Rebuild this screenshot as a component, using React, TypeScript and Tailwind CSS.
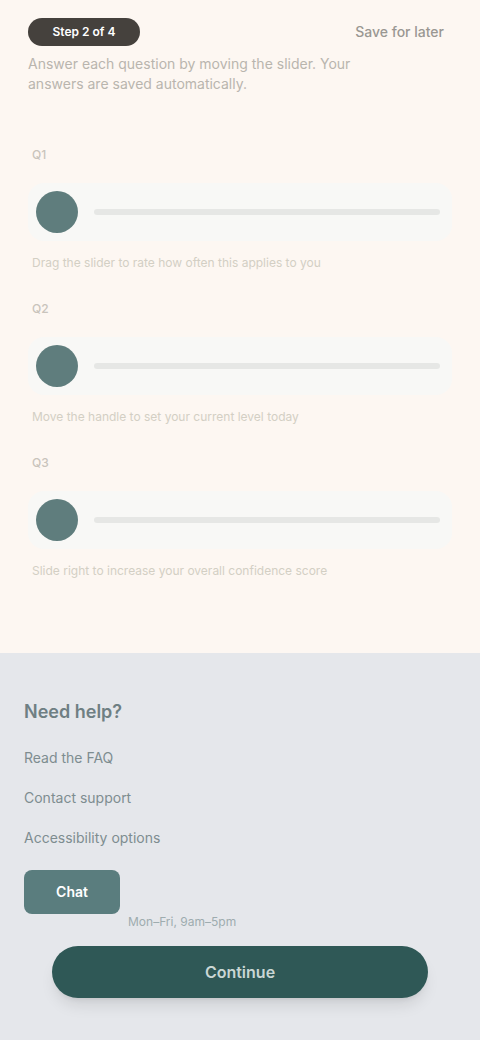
import React from "react";

const questions = [
  { label: "Q1", hint: "Drag the slider to rate how often this applies to you" },
  { label: "Q2", hint: "Move the handle to set your current level today" },
  { label: "Q3", hint: "Slide right to increase your overall confidence score" },
];

function SliderRow() {
  return (
    <div className="flex items-center gap-4 rounded-2xl bg-[#f8f8f6] py-2 pl-2 pr-3">
      <div className="h-[42px] w-[42px] shrink-0 rounded-full bg-[#5f7d7d]" />
      <div className="h-1.5 flex-1 rounded-full bg-[#e6e7e5]" />
    </div>
  );
}

export default function App() {
  return (
    <div
      className="relative min-h-[1040px] w-full bg-[#fdf7f2]"
      style={{ fontFamily: "Inter, 'Noto Sans', sans-serif" }}
    >
      <div className="px-7 pt-[18px]">
        <div className="flex items-center justify-between">
          <div className="flex h-7 w-[112px] items-center justify-center rounded-full bg-[#45413d] text-xs font-semibold text-white">
            Step 2 of 4
          </div>
          <span className="pr-2 text-sm font-medium text-[#9a9792]">Save for later</span>
        </div>
        <p className="mt-2 w-[350px] text-sm leading-5 text-[#b9b5ae]">
          Answer each question by moving the slider. Your answers are saved automatically.
        </p>
      </div>

      <div className="mt-[53px] flex flex-col gap-[30px] px-7">
        {questions.map((q) => (
          <div key={q.label} className="flex flex-col">
            <span className="pl-1 text-xs font-medium text-[#c9c4bc]">{q.label}</span>
            <div className="mt-[20px]">
              <SliderRow />
            </div>
            <p className="mt-[14px] pl-1 text-xs text-[#d3cfc4]">{q.hint}</p>
          </div>
        ))}
      </div>

      <footer className="absolute bottom-0 left-0 right-0 h-[387px] bg-[#e5e7eb] px-6 pt-[45px]">
        <h3 className="text-lg font-semibold text-[#6f7f83]">Need help?</h3>
        <ul className="mt-[22px] flex flex-col gap-[20px] text-sm text-[#7e8d90]">
          <li>Read the FAQ</li>
          <li>Contact support</li>
          <li>Accessibility options</li>
        </ul>
        <div className="mt-[22px] flex items-center gap-3">
          <div className="flex h-11 w-[96px] items-center justify-center rounded-lg bg-[#5a7d7e] text-sm font-semibold text-white">
            Chat
          </div>
        </div>
        <p className="mt-0 pl-[104px] text-xs text-[#9eacaf]">Mon–Fri, 9am–5pm</p>
      </footer>

      <button className="absolute bottom-[42px] left-[52px] right-[52px] flex h-[52px] items-center justify-center rounded-full bg-[#2f5856] text-base font-semibold text-[#c9d6d4] shadow-lg">
        Continue
      </button>
    </div>
  );
}
